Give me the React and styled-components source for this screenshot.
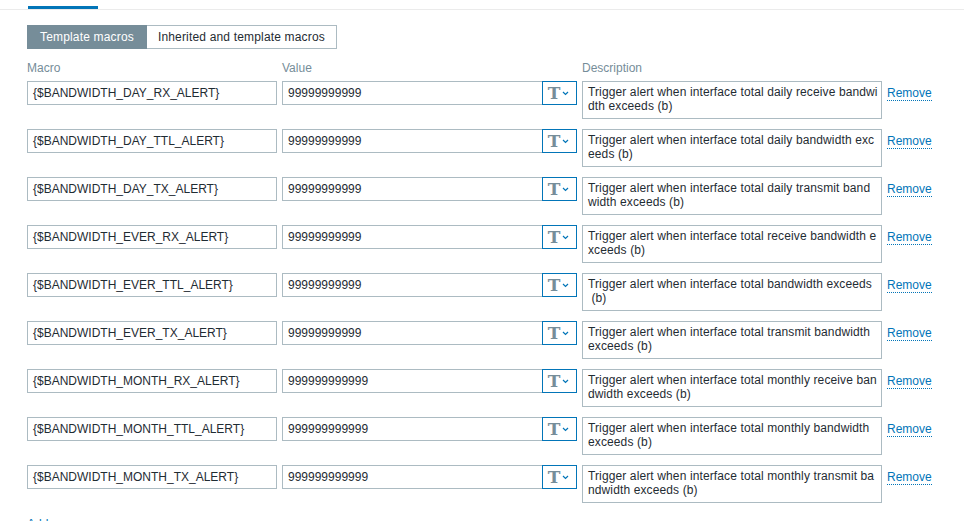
import React from 'react';
import styled, { createGlobalStyle } from 'styled-components';

const GlobalStyle = createGlobalStyle`
  body {
    margin: 0;
    background: #ffffff;
    font-family: "Liberation Sans", Arial, sans-serif;
    font-size: 12px;
    color: #1f2c33;
  }
`;

// description lines are split where the reference table wraps them
const macros = [
  ['{$BANDWIDTH_DAY_RX_ALERT}', '99999999999', ['Trigger alert when interface total daily receive bandwi', 'dth exceeds (b)']],
  ['{$BANDWIDTH_DAY_TTL_ALERT}', '99999999999', ['Trigger alert when interface total daily bandwidth exc', 'eeds (b)']],
  ['{$BANDWIDTH_DAY_TX_ALERT}', '99999999999', ['Trigger alert when interface total daily transmit band', 'width exceeds (b)']],
  ['{$BANDWIDTH_EVER_RX_ALERT}', '99999999999', ['Trigger alert when interface total receive bandwidth e', 'xceeds (b)']],
  ['{$BANDWIDTH_EVER_TTL_ALERT}', '99999999999', ['Trigger alert when interface total bandwidth exceeds', ' (b)']],
  ['{$BANDWIDTH_EVER_TX_ALERT}', '99999999999', ['Trigger alert when interface total transmit bandwidth', 'exceeds (b)']],
  ['{$BANDWIDTH_MONTH_RX_ALERT}', '999999999999', ['Trigger alert when interface total monthly receive ban', 'dwidth exceeds (b)']],
  ['{$BANDWIDTH_MONTH_TTL_ALERT}', '999999999999', ['Trigger alert when interface total monthly bandwidth', 'exceeds (b)']],
  ['{$BANDWIDTH_MONTH_TX_ALERT}', '999999999999', ['Trigger alert when interface total monthly transmit ba', 'ndwidth exceeds (b)']],
];

const Page = styled.div`
  height: 521px;
  overflow: hidden;
`;

const TabBar = styled.div`
  height: 9px;
  border-bottom: 1px solid #ebebeb;
  padding-left: 28px;
  display: flex;
  align-items: flex-end;
`;

const TabMarker = styled.div`
  width: 70px;
  height: 3px;
  background: #0275b8;
`;

const Content = styled.div`
  padding: 15px 0 0 27px;
`;

const Switcher = styled.div`
  display: flex;
  height: 24px;
`;

const SwitchButton = styled.div`
  display: flex;
  align-items: center;
  padding: 0 ${(p) => (p.$active ? '12px' : '11px')};
  box-sizing: border-box;
  border: 1px solid ${(p) => (p.$active ? '#768d99' : '#acbbc2')};
  border-left-width: ${(p) => (p.$active ? '1px' : '0')};
  background: ${(p) => (p.$active ? '#768d99' : '#ffffff')};
  color: ${(p) => (p.$active ? '#ffffff' : '#1f2c33')};
  letter-spacing: 0.17px;
  white-space: nowrap;
`;

const Grid = styled.div`
  display: grid;
  grid-template-columns: 250px 295px 300px auto;
  column-gap: 5px;
  row-gap: 10px;
  margin-top: 12px;
  align-items: start;
`;

const HeadCell = styled.div`
  color: #768d99;
  height: 15px;
  line-height: 14px;
  margin-bottom: -5px;
`;

const TextBox = styled.div`
  height: 24px;
  box-sizing: border-box;
  border: 1px solid #acbbc2;
  padding: 0 5px;
  line-height: 22px;
  white-space: nowrap;
  overflow: hidden;
  background: #ffffff;
`;

const ValueGroup = styled.div`
  display: flex;
`;

const ValueBox = styled(TextBox)`
  flex: 1;
  border-right: 0;
`;

const TypeButton = styled.div`
  width: 35px;
  height: 24px;
  box-sizing: border-box;
  border: 1px solid #0275b8;
  display: flex;
  align-items: center;
  justify-content: center;
  gap: 2px;
  padding-right: 2px;
`;

const TypeGlyph = styled.span`
  font-family: "DejaVu Serif", "Liberation Serif", serif;
  font-weight: bold;
  font-size: 17px;
  color: #768d99;
  line-height: 1;
`;

const DescBox = styled.div`
  height: 38px;
  box-sizing: border-box;
  border: 1px solid #acbbc2;
  padding: 3px 5px;
  line-height: 14px;
  letter-spacing: 0.12px;
  white-space: pre;
  overflow: hidden;
`;

const DescLine = styled.div``;

const LinkText = styled.span`
  display: inline-block;
  color: #0275b8;
  border-bottom: 1px dotted #0275b8;
  line-height: 14px;
  margin-top: ${(p) => (p.$add ? '0' : '5px')};
`;

const AddRow = styled.div`
  margin-top: 14px;
`;

function Chevron() {
  return (
    <svg width="7" height="5" viewBox="0 0 7 5">
      <path d="M1 1l2.5 2.5L6 1" fill="none" stroke="#0275b8" strokeWidth="1.2" />
    </svg>
  );
}

export default function App() {
  return (
    <Page>
      <GlobalStyle />
      <TabBar>
        <TabMarker />
      </TabBar>
      <Content>
        <Switcher>
          <SwitchButton $active>Template macros</SwitchButton>
          <SwitchButton>Inherited and template macros</SwitchButton>
        </Switcher>
        <Grid>
          <HeadCell>Macro</HeadCell>
          <HeadCell>Value</HeadCell>
          <HeadCell>Description</HeadCell>
          <HeadCell />
          {macros.map(([name, value, desc]) => (
            <React.Fragment key={name}>
              <TextBox>{name}</TextBox>
              <ValueGroup>
                <ValueBox>{value}</ValueBox>
                <TypeButton>
                  <TypeGlyph>T</TypeGlyph>
                  <Chevron />
                </TypeButton>
              </ValueGroup>
              <DescBox>
                {desc.map((line) => (
                  <DescLine key={line}>{line}</DescLine>
                ))}
              </DescBox>
              <div>
                <LinkText>Remove</LinkText>
              </div>
            </React.Fragment>
          ))}
        </Grid>
        <AddRow>
          <LinkText $add>Add</LinkText>
        </AddRow>
      </Content>
    </Page>
  );
}
